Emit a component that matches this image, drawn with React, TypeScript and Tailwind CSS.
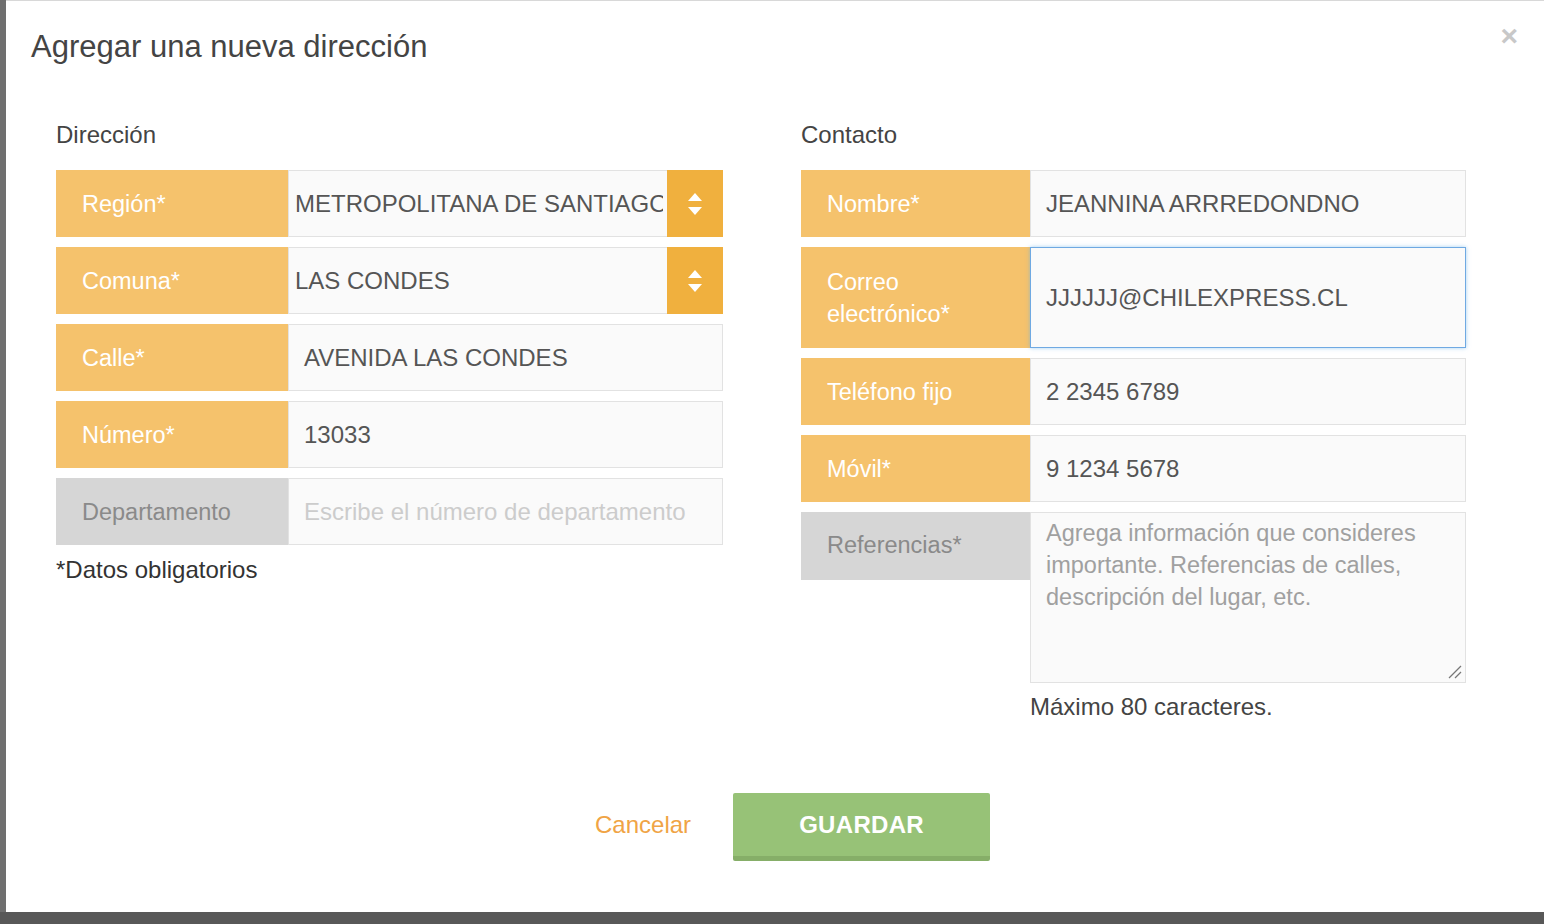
import React from 'react';

const font = { fontFamily: '"Liberation Sans", Arial, sans-serif' };

const SelectArrows = () => (
  <svg width="18" height="28" viewBox="0 0 18 28">
    <polygon points="9,3 16,11 2,11" fill="#fff" />
    <polygon points="2,17 16,17 9,25" fill="#fff" />
  </svg>
);

interface RowProps {
  label: React.ReactNode;
  value?: string;
  placeholder?: string;
  select?: boolean;
  muted?: boolean;
  focused?: boolean;
  height?: string;
}

const Row: React.FC<RowProps & { labelW: string }> = ({ label, value, placeholder, select, muted, focused, height = 'h-[67px]', labelW }) => (
  <div className={`flex ${height}`}>
    <div
      className={`${labelW} shrink-0 flex items-center pl-[26px] text-[23.5px] leading-[32px] ${
        muted ? 'bg-[#d6d6d6] text-[#8a8a8a]' : 'bg-[#f5c26c] text-white'
      }`}
    >
      {label}
    </div>
    <div
      className={`flex-1 min-w-0 flex items-center bg-[#fafafa] border ${
        focused ? 'border-[#6fa9e2] shadow-[0_0_4px_rgba(102,175,233,0.6)]' : 'border-[#e2e2e2]'
      }`}
    >
      <div
        className={`flex-1 min-w-0 overflow-hidden whitespace-nowrap text-[24px] ${select ? 'pl-[6px] mr-[4px]' : 'pl-[15px]'} ${
          placeholder ? 'text-[#cccccc]' : 'text-[#555555]'
        }`}
      >
        {value ?? placeholder}
      </div>
      {select && (
        <div className="w-[56px] shrink-0 self-stretch bg-[#f0b03e] flex items-center justify-center -my-px -mr-px">
          <SelectArrows />
        </div>
      )}
    </div>
  </div>
);

export default function App() {
  return (
    <div className="flex w-[1544px] h-[924px] bg-[#585858] overflow-hidden" style={font}>
      <div className="w-[6px] h-[912px] bg-[#6f6f6f] shrink-0" />
      <div className="relative flex-1 h-[912px] bg-white border-t border-[#d8d8d8]">
        <button className="absolute right-[26px] top-[20px] text-[30px] leading-[30px] font-bold text-[#c8c8c8]">
          ×
        </button>

        <h1 className="pt-[27px] pl-[25px] text-[31px] leading-[38px] text-[#444444]">Agregar una nueva dirección</h1>

        <div className="flex pl-[50px] gap-[78px] mt-[54px]">
          {/* Dirección */}
          <div className="w-[667px]">
            <h2 className="text-[24px] leading-[30px] text-[#444444] mb-[20px]">Dirección</h2>
            <div className="flex flex-col gap-[10px]">
              <Row labelW="w-[232px]" label="Región*" value="METROPOLITANA DE SANTIAGO" select />
              <Row labelW="w-[232px]" label="Comuna*" value="LAS CONDES" select />
              <Row labelW="w-[232px]" label="Calle*" value="AVENIDA LAS CONDES" />
              <Row labelW="w-[232px]" label="Número*" value="13033" />
              <Row labelW="w-[232px]" label="Departamento" placeholder="Escribe el número de departamento" muted />
            </div>
            <p className="mt-[10px] text-[24px] leading-[30px] text-[#333333]">*Datos obligatorios</p>
          </div>

          {/* Contacto */}
          <div className="w-[665px]">
            <h2 className="text-[24px] leading-[30px] text-[#444444] mb-[20px]">Contacto</h2>
            <div className="flex flex-col gap-[10px]">
              <Row labelW="w-[229px]" label="Nombre*" value="JEANNINA ARRREDONDNO" />
              <Row
                labelW="w-[229px]"
                label={
                  <span>
                    Correo
                    <br />
                    electrónico*
                  </span>
                }
                value="JJJJJJ@CHILEXPRESS.CL"
                focused
                height="h-[101px]"
              />
              <Row labelW="w-[229px]" label="Teléfono fijo" value="2 2345 6789" />
              <Row labelW="w-[229px]" label="Móvil*" value="9 1234 5678" />
              <div className="flex">
                <div className="w-[229px] h-[68px] shrink-0 flex items-center pl-[26px] text-[23.5px] bg-[#d6d6d6] text-[#8a8a8a]">
                  Referencias*
                </div>
                <div className="relative flex-1 h-[171px] bg-[#fafafa] border border-[#e2e2e2] pl-[15px] pt-[4px] pr-[30px] text-[23.5px] leading-[32px] text-[#a0a0a0]">
                  Agrega información que consideres importante. Referencias de calles, descripción del lugar, etc.
                  <svg className="absolute right-[3px] bottom-[3px]" width="16" height="16" viewBox="0 0 16 16">
                    <line x1="3" y1="15" x2="15" y2="3" stroke="#777" strokeWidth="1.2" />
                    <line x1="9" y1="15" x2="15" y2="9" stroke="#777" strokeWidth="1.2" />
                  </svg>
                </div>
              </div>
              <p className="-mt-[1px] pl-[229px] text-[24px] leading-[30px] text-[#444444]">Máximo 80 caracteres.</p>
            </div>
          </div>
        </div>

        <div className="flex items-center pl-[589px] gap-[42px] mt-[71px]">
          <span className="text-[24px] leading-[30px] -mt-[4px] text-[#f0a445]">Cancelar</span>
          <button className="w-[257px] h-[68px] bg-[#97c277] border-b-[5px] border-[#86ae68] rounded-[2px] text-white font-bold text-[24px] tracking-[0.3px]">
            GUARDAR
          </button>
        </div>
      </div>
    </div>
  );
}
